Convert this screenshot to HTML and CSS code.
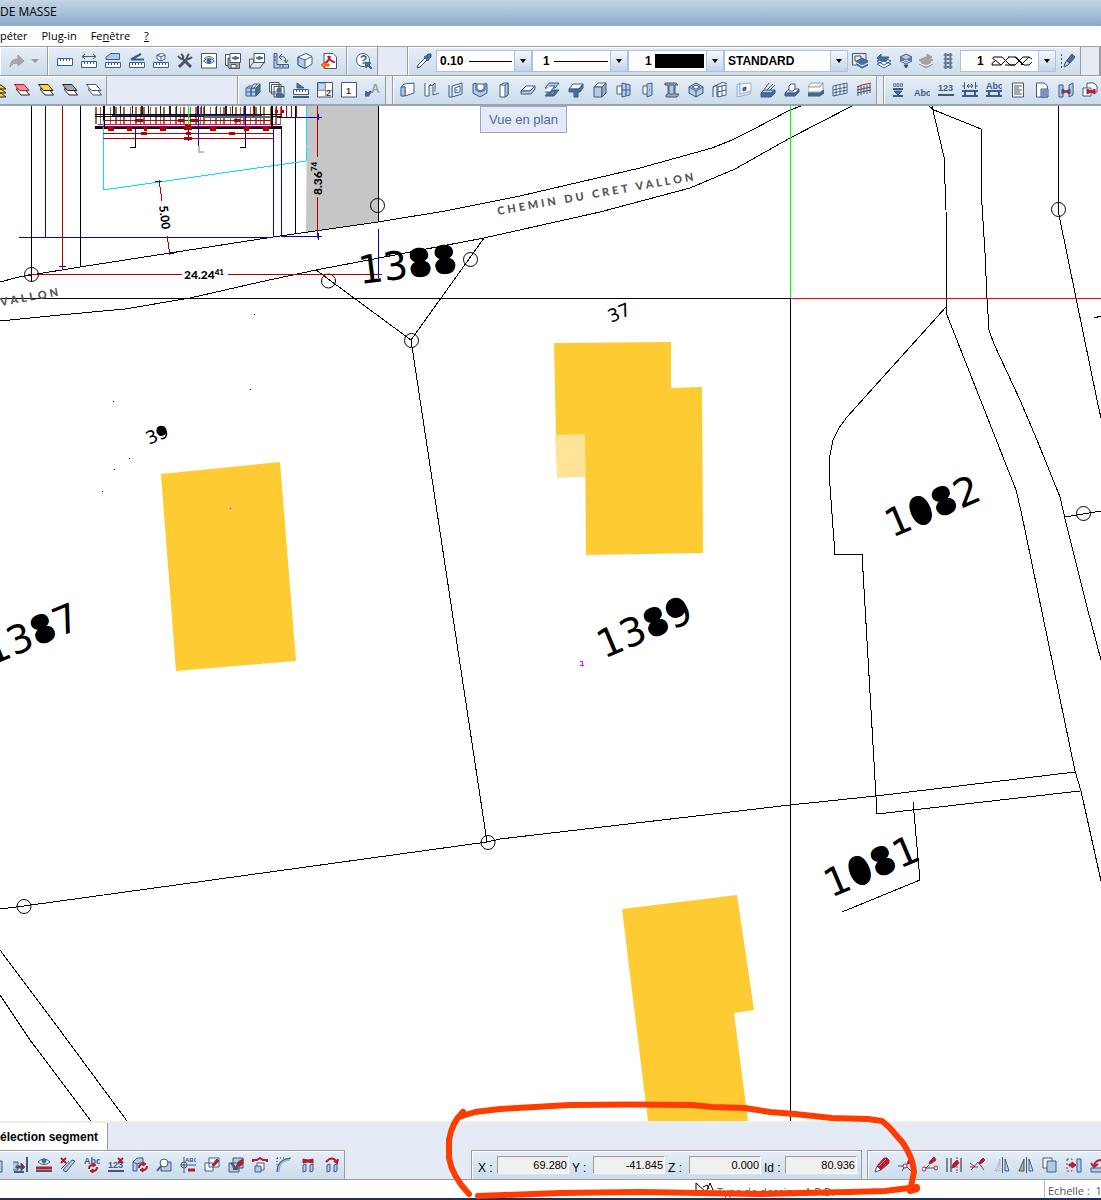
FILE: index.html
```html
<!DOCTYPE html>
<html lang="fr">
<head>
    <meta charset="UTF-8">
    <meta name="viewport" content="width=device-width, initial-scale=1.0">
    <title>Plan de masse</title>
    <link rel="stylesheet" href="styles.css">
</head>
<body>
    <!-- icon set, 16x16 -->
    <svg class="defs" aria-hidden="true">
        <symbol id="redo" viewBox="0 0 16 16"><path class="f-grey s-grey" d="M1 14 Q1 6 9 6 V2 L15 8 L9 13 V10 Q4 9 1 14 Z"/></symbol>
        <symbol id="ruler" viewBox="0 0 16 16"><path class="f-white" d="M.5 5.500 H15.500 V12.500 H.5 Z M3.500 5.500 V8 M6.500 5.500 V8 M9.500 5.500 V8 M12.500 5.500 V8"/></symbol>
        <symbol id="ruler-h" viewBox="0 0 16 16"><path class="f-white" d="M.5 8.500 H15.500 V14.500 H.5 Z M3.500 8.500 V11 M6.500 8.500 V11 M9.500 8.500 V11 M12.500 8.500 V11"/><path class="s-dark" d="M1 3.500 H15 M4 1 L1 3.500 L4 6 M12 1 L15 3.500 L12 6"/></symbol>
        <symbol id="ruler-area" viewBox="0 0 16 16"><path class="f-light" d="M1 6.500 V4 L6 .5 H14.500 V6.500 Z"/><path class="f-white" d="M.5 9.500 H15.500 V14.500 H.5 Z M3.500 9.500 V12 M6.500 9.500 V12 M9.500 9.500 V12 M12.500 9.500 V12"/></symbol>
        <symbol id="ruler-angle" viewBox="0 0 16 16"><path class="thick" d="M12 1 L2 6.500 H15"/><path class="f-white" d="M.5 9.500 H15.500 V14.500 H.5 Z M3.500 9.500 V12 M6.500 9.500 V12 M9.500 9.500 V12 M12.500 9.500 V12"/></symbol>
        <symbol id="ruler-box" viewBox="0 0 16 16"><path class="f-white" d="M4 2 L9 0 L12 2 V6 L8 8 L4 6 Z M4 2 L8 4 L12 2 M8 4 V8"/><path class="f-white" d="M.5 9.500 H15.500 V14.500 H.5 Z M3.500 9.500 V12 M6.500 9.500 V12 M9.500 9.500 V12 M12.500 9.500 V12"/></symbol>
        <symbol id="tools" viewBox="0 0 16 16"><path class="s-dark bold" d="M2 14 L11 5 M8 8 L14 14"/><path class="s-dark thick" d="M5 5 L9 9 M1 3 Q4 7 6 5 Q7 3 4 1 M12 1 Q9 4 11 6 Q13 6 15 4"/></symbol>
        <symbol id="eye-frame" viewBox="0 0 16 16"><path class="f-white s-dark" d="M.5 .5 H15.500 V15 H.5 Z"/><path d="M2.500 8 Q8 3 13.500 8 Q8 13 2.500 8 Z M3 6 Q8 1 13 6"/><circle class="f-dark" cx="8" cy="8" r="2"/></symbol>
        <symbol id="eye-save" viewBox="0 0 16 16"><path class="f-white s-dark" d="M.5 1.500 H8 V12.500 H.5 Z"/><path class="f-grey s-dark" d="M3 5 H14.500 V15.500 H4 L3 14 Z"/><path class="f-white s-dark" d="M6 11.500 H11 V15 H6 Z M5 .5 H15.500 V9.500 H5 Z"/><path d="M7 5 Q10 2 14 5 Q10 8 7 5 Z"/><circle class="f-dark" cx="10.500" cy="5" r="1"/></symbol>
        <symbol id="eye-folder" viewBox="0 0 16 16"><path class="f-pale s-dark" d="M.5 15 V6 H4 L5 9 H12"/><path class="f-white s-dark" d="M5 .5 H15.500 V10 H5 Z"/><path d="M7 5 Q10 2 14 5 Q10 8 7 5 Z"/><circle class="f-dark" cx="10.500" cy="5" r="1"/><path class="f-pale s-dark" d="M.5 15 L4 9.500 H15 L11 15 Z"/></symbol>
        <symbol id="angle" viewBox="0 0 16 16"><path class="f-light" d="M1 .5 H4 V11.500 H15.500 V15 H1 Z M1 4 H3 M1 7 H3 M7 12 V14 M10 12 V14"/><path class="s-dark" d="M7 4 Q13 2 13 9 M9 1 L6 4 L9 7 M11 7 L13 10 L15 7"/></symbol>
        <symbol id="cube" viewBox="0 0 16 16"><path class="f-white" d="M1 4 L9 .5 L15 3.500 V11 L8 15.500 L1 12 Z"/><path class="f-light" d="M1 4 L8 7 V15.500 L1 12 Z"/><path d="M8 7 L15 3.500"/></symbol>
        <symbol id="pdf" viewBox="0 0 16 16"><path class="f-white s-dark" d="M3 .5 H12 L15.500 4 V15.500 H3 Z"/><path class="s-red thick" d="M7 3 Q9 9 14 9 M9 3 Q8 8 4 10"/><path class="f-orange s-orange" d="M0 12 L4 9 V11 H8 V13 H4 V15 Z"/></symbol>
        <symbol id="help" viewBox="0 0 16 16"><circle class="f-white" cx="7" cy="7" r="6.500"/><text x="4" y="11" class="glyph big">?</text><path class="f-dark" d="M9 9 L15 10 L13 12 L16 15 L15 16 L12 13 L10 15 Z"/></symbol>
        <symbol id="dropper" viewBox="0 0 16 16"><path class="f-white s-dark" d="M1 15 L2 12 L9 5 L11 7 L4 14 Z"/><path class="f-dark" d="M8 4 L10 3 L12 1 H15 V4 L13 6 L12 8 Z"/></symbol>
        <symbol id="layers-copy" viewBox="0 0 16 16"><path class="f-pale s-dark" d="M.5 .5 H14 V12 H.5 Z"/><path class="s-dark" d="M3 3 H9 V8 H3 Z"/><path class="f-dark" d="M5 8 L10 5 L16 8 V12 L10 15 L5 12 Z"/><path class="s-white" d="M5 10 L10 13 L16 10"/></symbol>
        <symbol id="layers-back" viewBox="0 0 16 16"><path class="f-white" d="M1 11 L8 8 L15 11 L8 15 Z M1 8 L8 5 L15 8 L8 12 Z"/><path class="f-dark" d="M1 5 L5 1 V4 H13 L10 8 H5 Z"/></symbol>
        <symbol id="layers-down" viewBox="0 0 16 16"><path class="f-white" d="M2 8 L8 5 L14 8 L8 11 Z M2 6 L8 3 L14 6 L8 9 Z"/><path class="f-light" d="M2 4 L8 1 L14 4 L8 7 Z"/><path class="f-black" d="M6 12 H10 L8 15 Z"/></symbol>
        <symbol id="layers-grey" viewBox="0 0 16 16"><path class="f-grey s-grey" d="M1 11 L8 8 L15 11 L8 15 Z M1 7 L8 4 L15 7 L8 11 Z M9 1 L14 4 L9 6 Z"/><path class="s-white" d="M1 10 L8 13 L15 10"/></symbol>
        <symbol id="chain" viewBox="0 0 16 16"><path class="s-dark" d="M5 0 L11 4 L5 8 L11 12 L5 16 M11 0 L5 4 L11 8 L5 12 L11 16"/><circle cx="5" cy="2" r="1"/><circle cx="11" cy="2" r="1"/><circle cx="5" cy="6" r="1"/><circle cx="11" cy="6" r="1"/><circle cx="5" cy="10" r="1"/><circle cx="11" cy="10" r="1"/><circle cx="5" cy="14" r="1"/><circle cx="11" cy="14" r="1"/></symbol>
        <symbol id="pencil" viewBox="0 0 16 16"><path class="s-dark" stroke-dasharray="2 2" d="M1.500 1 V15"/><path class="f-light s-dark" d="M4 14 L5 10 L12 1 L15 4 L8 12 Z"/><path class="f-dark" d="M7 8 L12 1 L15 4 L10 10 Z"/></symbol>
        <symbol id="sheets" viewBox="0 0 16 16"><path class="f-yellow s-black" d="M0 11 H11 L16 15 H5 Z M0 7 H11 L16 11 H5 Z M0 3 H11 L16 7 H5 Z"/></symbol>
        <symbol id="layer-red" viewBox="0 0 16 16"><path class="f-white s-black" d="M2 7 H11 L15.500 13 H7 Z"/><path class="f-pink s-red" d="M.5 2.500 H10 L15 8.500 H5.500 Z"/></symbol>
        <symbol id="layer-yellow" viewBox="0 0 16 16"><path class="f-white s-black" d="M2 7 H11 L15.500 13 H7 Z"/><path class="f-yellow s-black" d="M.5 2.500 H10 L15 8.500 H5.500 Z"/></symbol>
        <symbol id="layer-grey" viewBox="0 0 16 16"><path class="f-white s-black" d="M2 7 H11 L15.500 13 H7 Z"/><path class="f-grey s-black" d="M.5 2.500 H10 L15 8.500 H5.500 Z"/></symbol>
        <symbol id="layer-white" viewBox="0 0 16 16"><path class="f-white s-dark" d="M2 7 H11 L15.500 13 H7 Z"/><path class="f-white s-dark" d="M.5 2.500 H10 L15 8.500 H5.500 Z"/></symbol>
        <symbol id="blocks" viewBox="0 0 16 16"><path class="f-light" d="M1 6 H6 V14 H1 Z M6 6 H11 V14 H6 Z M1 10 H11"/><path class="f-white" d="M6 6 L9 2 H15 L11 6 Z"/><path class="f-dark" d="M11 6 L15 2 V10 L11 14 Z"/><path d="M9 6 L12 2 M1 6 L4 4 H8"/></symbol>
        <symbol id="views" viewBox="0 0 16 16"><path class="f-white s-dark" d="M.5 .5 H10 V10 H.5 Z M2.500 2.500 H12 V12 H2.500 Z M5 4.500 H15 V15 H5 Z"/><circle class="f-dark" cx="10" cy="8" r="2"/><path class="f-dark" d="M7 15 Q7 11 10 11 Q15 11 15 15 Z"/></symbol>
        <symbol id="ruler-tri" viewBox="0 0 16 16"><path class="f-dark" d="M4 1 L11 6 H4 Z"/><path class="f-white" d="M.5 7.500 H15.500 V12.500 H.5 Z M3.500 7.500 V10 M6.500 7.500 V10 M9.500 7.500 V10 M12.500 7.500 V10"/><path class="thick" d="M0 15 H16"/></symbol>
        <symbol id="split" viewBox="0 0 16 16"><path class="f-white s-dark" d="M.5 .5 H15.500 V15 H.5 Z"/><path class="f-blue s-blue" d="M1.500 1.500 H8 V8 H1.500 Z"/><path class="s-grey" d="M8.500 1 V15 M1 8.500 H15"/><text x="9" y="14" class="glyph dark">2</text></symbol>
        <symbol id="page-one" viewBox="0 0 16 16"><path class="f-white s-dark" d="M.5 .5 H15.500 V15 H.5 Z"/><text x="5" y="12" class="glyph dark">1</text></symbol>
        <symbol id="arrow-a" viewBox="0 0 16 16"><text x="6" y="11" class="glyph big grey">A</text><path class="f-dark" d="M0 14 L1 9 L3 11 Q4 9 6 9 V11 Q4 11 4 14 Z"/></symbol>
        <symbol id="wall" viewBox="0 0 16 16"><path class="f-white" d="M1 5 L4 2 L14 1 V11 L5 14 V5 Z"/><path class="f-light" d="M1 5 H5 V14 H1 Z"/></symbol>
        <symbol id="wall-n" viewBox="0 0 16 16"><path class="f-white" d="M1 1 V14 H5 V4 L9 3 V13 L15 11 M5 4 L7 2 M9 3 L11 1 V10"/></symbol>
        <symbol id="wall-hole" viewBox="0 0 16 16"><path class="f-pale" d="M1 3 V15 H4 V4 L14 1 V12 L4 15"/><path class="f-white" d="M7 6 L12 4 V10 L7 11 Z M9 7 V9"/></symbol>
        <symbol id="niche" viewBox="0 0 16 16"><path class="f-light" d="M1 2 L4 1 V8 L8 10 L13 8 V1 L15 2 V11 L8 15 L1 11 Z"/><path class="f-white" d="M5 2 H12 V7 L8 9 L5 7 Z"/></symbol>
        <symbol id="column" viewBox="0 0 16 16"><path class="f-white" d="M4 3 L8 1 H12 V13 L9 15 H4 Z"/><path class="f-light" d="M9 3 L12 1 V13 L9 15 Z M4 3 H9"/></symbol>
        <symbol id="slab" viewBox="0 0 16 16"><path class="f-white" d="M1 9 L6 4 H15 L10 9 Z"/><path class="f-light" d="M1 9 H10 L15 4 V7 L11 12 H1 Z"/></symbol>
        <symbol id="slab-hole" viewBox="0 0 16 16"><path class="f-light" d="M1 6 L5 1 H15 L11 6 Z"/><path class="f-dark" d="M1 14 L6 8 H15 L10 14 Z"/><path class="f-white" d="M5 4 H11 L6 10 H1 M6 12 H9 L11 10"/></symbol>
        <symbol id="tbeam" viewBox="0 0 16 16"><path class="f-white" d="M1 7 L5 2 H15 L11 7 Z"/><path class="f-dark" d="M1 7 H11 L15 2 V6 L12 10 H10 V15 H6 V10 H1 Z"/></symbol>
        <symbol id="block" viewBox="0 0 16 16"><path class="f-white" d="M2 5 L6 1 H14 L10 5 Z"/><path class="f-light" d="M2 5 H10 V15 H2 Z"/><path class="f-grey" d="M10 5 L14 1 V11 L10 15 Z"/></symbol>
        <symbol id="window" viewBox="0 0 16 16"><path class="f-white" d="M1 4 H6 V12 H1 Z"/><path class="f-light" d="M6 1 L14 3 V13 L6 15 Z"/><path d="M10 2 V14 M6 8 H14"/></symbol>
        <symbol id="door" viewBox="0 0 16 16"><path class="f-white" d="M3 4 H8 V12 H3 Z"/><path class="f-light" d="M7 2 L12 1 V13 L7 15 Z"/><path d="M9 8 H10"/></symbol>
        <symbol id="ibeam" viewBox="0 0 16 16"><path class="f-grey s-dark" d="M1 1 H12 L14 3 H11 V12 H15 L13 15 H2 V13 L4 12 V3 H1 Z"/><path class="f-light" d="M5 3 H10 V12 H5 Z"/></symbol>
        <symbol id="cube-open" viewBox="0 0 16 16"><path class="f-light" d="M1 5 L8 1 L15 5 V11 L8 15 L1 11 Z"/><path class="f-white" d="M4 5 L8 3 L12 5 L8 7 Z"/><path d="M1 5 L8 9 L15 5 M8 9 V15"/></symbol>
        <symbol id="facade" viewBox="0 0 16 16"><path class="f-pale s-dark" d="M1 15 V5 L5 3 V15 M1 5 L11 0 L15 2"/><path class="f-white" d="M6 5 L14 3 V13 L6 15 Z M10 4 V14 M6 10 L14 8"/></symbol>
        <symbol id="panel" viewBox="0 0 16 16"><path class="f-pale s-blue" d="M1 3 L4 1 V12 L14 9 V12 L1 15 Z"/><path class="f-white s-blue" d="M4 2 L15 1 V9 L4 12 Z"/><path class="f-dark" d="M7 6 L10 5 V8 L7 9 Z"/></symbol>
        <symbol id="stairs" viewBox="0 0 16 16"><path class="s-dark" d="M3 9 L9 1 M6 9 L13 2 M9 9 L15 3"/><path class="f-light" d="M1 11 L4 8 H15 L11 11 Z"/><path class="f-dark" d="M1 11 H11 L15 8 V11 L11 15 H1 Z"/></symbol>
        <symbol id="opening" viewBox="0 0 16 16"><path class="f-white" d="M1 11 L5 7 H15 L11 11 Z"/><path class="f-white s-dark" d="M5 9 V4 L7 2 H11 V7 L9 9 Z"/><path class="f-dark" d="M1 11 H11 L15 7 V10 L11 14 H1 Z"/></symbol>
        <symbol id="plate" viewBox="0 0 16 16"><path class="f-white s-grey" d="M0 5 L3 1 H15 V8 L12 10 H0 Z M0 5 H12 L15 1"/><path class="f-dark" d="M0 11 H12 L16 8 V11 L12 14 H0 Z"/></symbol>
        <symbol id="grid" viewBox="0 0 16 16"><path class="f-white" d="M1 4 L15 1 V11 L1 14 Z M4 3 V13 M8 3 V12 M12 2 V12 M1 8 L15 5 M1 11 L15 8"/></symbol>
        <symbol id="railing" viewBox="0 0 16 16"><path class="s-dark" d="M2 4 V14 M5 4 V13 M8 4 V12 M11 3 V12 M14 2 V11 M1 8 L15 5 M1 11 L15 8"/><path class="s-red" d="M1 5 L6 3 L15 1"/></symbol>
        <symbol id="level" viewBox="0 0 16 16"><text x="3" y="5" class="glyph tiny">000</text><path class="f-dark" d="M4 9 H12 L8 13 Z"/><path class="thick" d="M3 7 H13 M3 14 H13"/></symbol>
        <symbol id="abc" viewBox="0 0 16 16"><text x="0" y="14" class="glyph">Abc</text></symbol>
        <symbol id="num" viewBox="0 0 16 16"><text x="0" y="9" class="glyph">123</text><path class="thick s-dark" d="M0 13 H16"/></symbol>
        <symbol id="dim" viewBox="0 0 16 16"><path d="M2.500 0 V7 M13.500 0 V7 M0 4 H3 M13 4 H16 M5 4 H11 M7 2 L5 4 L7 6 M9 2 L11 4 L9 6"/><path class="thick" d="M0 9 H16 M0 14 H16 M3 9 V14 M13 9 V14"/></symbol>
        <symbol id="abc-dim" viewBox="0 0 16 16"><text x="0" y="7" class="glyph">Abc</text><path class="thick" d="M0 9 H16 M0 14 H16 M3 9 V14 M13 9 V14"/></symbol>
        <symbol id="page" viewBox="0 0 16 16"><path class="f-white s-dark" d="M2.500 1 H13.500 V15 H2.500 Z M4 4 H12 M4 6 H9 M4 8 H12 M4 10 H10 M4 12 H12"/></symbol>
        <symbol id="page-copy" viewBox="0 0 16 16"><path class="f-white s-dark" d="M2.500 1 H10 L13.500 4 V15 H2.500 Z"/><path class="f-light" d="M7 7 H14 V15 H7 Z M8 9 H13 M8 11 H13 M8 13 H13"/></symbol>
        <symbol id="link" viewBox="0 0 16 16"><path class="f-light" d="M1 3 H5 V15 H1 Z M11 3 L15 1 V13 L11 15 Z"/><path class="f-red" d="M4 7 L8 9 L12 7 V12 L8 10 L4 12 Z"/></symbol>
        <symbol id="link-copy" viewBox="0 0 16 16"><path class="f-white s-dark" d="M5 1 H12 L15 4 V10 H5 Z"/><path class="f-white" d="M1 6 H9 V14 H1 Z"/><path class="f-red s-red" d="M5 7 L9 9 L13 7 V12 L9 10 L5 12 Z"/></symbol>
        <!-- edit tools -->
        <symbol id="extend" viewBox="0 0 16 16"><path class="f-light" d="M1 5 H6 V13 H1"/><path class="thick" d="M15 0 V15 M2 15 H12"/><path class="f-red" d="M4 9 H9 V6 L13 10 L9 14 V11 H4 Z"/></symbol>
        <symbol id="eye-red" viewBox="0 0 16 16"><path class="f-white" d="M2 5 Q8 -1 14 5 Q8 10 2 5 Z"/><circle class="f-dark" cx="8" cy="4" r="2"/><path class="bold s-red" d="M0 11 H16"/><path class="thick s-dark" d="M0 14 H16"/></symbol>
        <symbol id="cut" viewBox="0 0 16 16"><path class="f-light" d="M3 13 L12 3 L15 4 L6 15 Z M1 12 L9 4"/><path class="thick s-red" d="M1 1 L6 6 M6 1 L1 6"/></symbol>
        <symbol id="abc-turn" viewBox="0 0 16 16"><text x="0" y="7" class="glyph">Abc</text><path class="thick s-red" d="M5 12 Q5 8 9 8 M13 10 Q13 14 9 14"/><path class="f-red s-red" d="M9 6 L12 8 L9 10 Z M9 12 L6 14 L9 16 Z"/></symbol>
        <symbol id="num-x" viewBox="0 0 16 16"><text x="0" y="11" class="glyph">123</text><path class="thick s-dark" d="M0 14 H16"/><path class="thick s-red" d="M10 1 L15 6 M15 1 L10 6"/></symbol>
        <symbol id="wall-turn" viewBox="0 0 16 16"><path class="f-light" d="M1 5 L5 1 H11 V5 L5 7 V14 H1 Z M1 5 L5 7"/><path class="thick s-red" d="M7 11 Q7 7 11 7 M15 9 Q15 13 11 13"/><path class="f-red s-red" d="M11 5 L14 7 L11 9 Z M11 11 L8 13 L11 15 Z"/></symbol>
        <symbol id="magnify" viewBox="0 0 16 16"><path class="f-light" d="M5 5 H15 V14 H5 Z"/><circle class="f-white s-dark" cx="8" cy="6" r="4"/><path class="thick" d="M5 9 L1 14"/></symbol>
        <symbol id="axis" viewBox="0 0 16 16"><path class="s-dark" d="M4 0 V16 M0 8 H16"/><circle cx="4" cy="8" r="3"/><text x="5" y="5" class="glyph tiny">ABC</text><path class="bold s-red" d="M8 13 H15"/></symbol>
        <symbol id="copy-pen" viewBox="0 0 16 16"><path class="f-white" d="M5 1 H15 V10 H5 Z M1 6 H9 V14 H1 Z"/><path class="f-red s-red" d="M8 8 L13 2 L15 4 L10 9 Z"/></symbol>
        <symbol id="copy-cut" viewBox="0 0 16 16"><path class="f-light" d="M5 1 H15 V11 H5 Z M1 6 H11 V15 H1 Z"/><path class="s-dark thick" d="M3 6 L9 12 M5 12 H9 V8"/><path class="f-red s-red" d="M9 9 L10 5 L15 2 V7 L12 9 Z"/></symbol>
        <symbol id="bridge" viewBox="0 0 16 16"><path class="f-white" d="M5 6 H12 V13 H5 Z"/><path class="f-light" d="M3 9 H9 V15 H3 Z"/><path class="thick s-red" d="M1 5 V3 H5 L8 1 L11 3 H15 V5"/></symbol>
        <symbol id="fillet" viewBox="0 0 16 16"><path class="bold s-blue" d="M2 15 Q2 3 14 2"/><path class="s-black" stroke-dasharray="1 2" d="M1 1 H10 M1 1 V10"/><path class="s-dark" d="M1 15 Q1 2 15 1"/></symbol>
        <symbol id="pair" viewBox="0 0 16 16"><path class="f-light" d="M3 8 L6 7 V14 L3 15 Z M10 8 L13 7 V14 L10 15 Z"/><path class="f-red s-red" d="M3 2 L8 3 L13 2 V6 L8 5 L3 6 Z"/></symbol>
        <symbol id="pair-turn" viewBox="0 0 16 16"><path class="f-light" d="M3 8 L6 7 V14 L3 15 Z M10 8 L13 7 V14 L10 15 Z"/><path class="thick s-red" d="M2 5 Q8 -2 13 5 M10 4 L13 6 L14 2"/></symbol>
        <symbol id="eraser" viewBox="0 0 16 16"><path class="f-red s-red" d="M3 9 L10 1 H13 L15 3 V6 L7 13 Z"/><path class="f-white s-dark" d="M1 15 L3 9 L7 13 Z"/><path class="s-pink" d="M5 9 L12 2"/></symbol>
        <symbol id="node-pen" viewBox="0 0 16 16"><path class="s-dark" d="M0 9 H6 M9 10 L14 15 M7 9 L4 14"/><circle class="f-white s-red" cx="7" cy="9" r="2"/><path class="f-red s-red" d="M9 7 L10 4 L13 1 L15 3 L12 6 Z"/></symbol>
        <symbol id="nodes-pen" viewBox="0 0 16 16"><path class="s-dark" d="M2 13 L7 8 M3 11 H13"/><circle class="f-white s-red" cx="2" cy="12" r="2"/><circle class="f-white s-red" cx="14" cy="11" r="2"/><path class="f-red s-red" d="M7 7 L8 4 L12 0 L14 3 L10 6 Z"/></symbol>
        <symbol id="bars-pen" viewBox="0 0 16 16"><path class="s-black" d="M1 1 V15 M5 1 V15 M15 1 V15"/><path class="s-dark" stroke-dasharray="2 1" d="M11 0 V16"/><path class="f-red s-red" d="M6 11 L7 7 L11 3 L13 6 L9 10 Z"/></symbol>
        <symbol id="cross-pen" viewBox="0 0 16 16"><path class="s-dark" d="M1 13 L8 5 L14 13"/><path class="s-red" d="M0 6 L5 10 M0 10 H8"/><path class="f-red s-red" d="M9 7 L10 4 L13 1 L15 3 L12 6 Z"/></symbol>
        <symbol id="mirror-dash" viewBox="0 0 16 16"><path class="s-grey" stroke-dasharray="1 1" d="M1 14 L6 2 V14 Z M3 13 L6 6"/><path class="s-dark" d="M8.500 0 V16"/><path class="f-blue" d="M11 2 V14 H15 Z"/></symbol>
        <symbol id="mirror" viewBox="0 0 16 16"><path class="f-grey s-dark" d="M1 14 L6 2 V14 Z"/><path class="s-dark" d="M8.500 0 V16"/><path class="f-blue" d="M11 2 V14 H15 Z"/></symbol>
        <symbol id="copy" viewBox="0 0 16 16"><path class="f-white s-dark" d="M1 1 H10 V11 H1 Z"/><path class="f-light" d="M5 4 H14 V15 H5 Z"/></symbol>
        <symbol id="move" viewBox="0 0 16 16"><path class="s-dark" stroke-dasharray="2 2" d="M1 2 H6 V14 H1 Z"/><path class="f-light" d="M11 2 H15 V15 H11 Z"/><path class="f-red s-red" d="M3 7 H6 V5 L10 8 L6 11 V9 H3 Z"/></symbol>
        <symbol id="rotate" viewBox="0 0 16 16"><path class="f-light" d="M1 11 H15 V15 H1 Z"/><path class="thick s-red" d="M4 9 Q5 2 14 3 M1 6 L4 10 L8 7"/></symbol>
    </svg>

    <header>
        <div class="titlebar"><span class="title">DE MASSE</span></div>
        <nav class="menubar">
            <a href="#">péter</a>
            <a href="#">Plug-in</a>
            <a href="#">Fe<u>n</u>être</a>
            <a href="#"><u>?</u></a>
        </nav>

        <div class="toolbar">
            <div class="group undo">
                <button class="tool narrow" aria-label="Rétablir"><svg class="icon"><use href="#redo"/></svg></button>
                <button class="tool drop" aria-label="Liste"><span class="caret grey"></span></button>
            </div>
            <div class="group padded">
                <button class="tool" aria-label="Distance"><svg class="icon"><use href="#ruler"/></svg></button>
                <button class="tool" aria-label="Longueur"><svg class="icon"><use href="#ruler-h"/></svg></button>
                <button class="tool" aria-label="Surface"><svg class="icon"><use href="#ruler-area"/></svg></button>
                <button class="tool" aria-label="Angle"><svg class="icon"><use href="#ruler-angle"/></svg></button>
                <button class="tool" aria-label="Volume"><svg class="icon"><use href="#ruler-box"/></svg></button>
                <button class="tool" aria-label="Options"><svg class="icon"><use href="#tools"/></svg></button>
                <button class="tool" aria-label="Vue"><svg class="icon"><use href="#eye-frame"/></svg></button>
                <button class="tool" aria-label="Enregistrer la vue"><svg class="icon"><use href="#eye-save"/></svg></button>
                <button class="tool" aria-label="Ouvrir une vue"><svg class="icon"><use href="#eye-folder"/></svg></button>
                <button class="tool" aria-label="Repère"><svg class="icon"><use href="#angle"/></svg></button>
                <button class="tool" aria-label="3D"><svg class="icon"><use href="#cube"/></svg></button>
                <button class="tool" aria-label="PDF"><svg class="icon"><use href="#pdf"/></svg></button>
            </div>
            <div class="group help">
                <button class="tool" aria-label="Aide"><svg class="icon"><use href="#help"/></svg></button>
            </div>
            <div class="group attributes">
                <button class="tool" aria-label="Pipette"><svg class="icon"><use href="#dropper"/></svg></button>
                <div class="combo">
                    <select aria-label="Épaisseur"><option>0.10</option></select>
                    <svg class="sample" viewBox="0 0 43 14"><path d="M0 7.500 H43"/></svg>
                    <span class="arrow"><span class="caret"></span></span>
                </div>
                <div class="combo">
                    <select class="short" aria-label="Type de ligne"><option>1</option></select>
                    <svg class="sample wide" viewBox="0 0 54 14"><path d="M0 7.500 H54"/></svg>
                    <span class="arrow"><span class="caret"></span></span>
                </div>
                <div class="combo">
                    <select class="color" aria-label="Couleur"><option>1</option></select>
                    <span class="swatch"></span>
                    <span class="arrow"><span class="caret"></span></span>
                </div>
                <div class="combo style">
                    <select class="full" aria-label="Style"><option>STANDARD</option></select>
                    <span class="arrow"><span class="caret"></span></span>
                </div>
                <button class="tool" aria-label="Copier le calque"><svg class="icon"><use href="#layers-copy"/></svg></button>
                <button class="tool" aria-label="Calque précédent"><svg class="icon"><use href="#layers-back"/></svg></button>
                <button class="tool narrow" aria-label="Calque actif"><svg class="icon"><use href="#layers-down"/></svg></button>
                <button class="tool narrow" aria-label="Calque suivant"><svg class="icon"><use href="#layers-grey"/></svg></button>
                <button class="tool" aria-label="Isolant"><svg class="icon"><use href="#chain"/></svg></button>
                <div class="combo">
                    <select class="insulation" aria-label="Motif"><option>1</option></select>
                    <svg class="sample smooth" viewBox="0 0 43 14"><path d="M3 3 H11 L19 11 H24 L32 3 H38 M17 3 H25 L33 11 H38 L41 8 M1 11 H10 L18 3 M14 11 H24 M30 11 L38 3 L41 5 M3 3 Q0 4 4 6 L10 11 M1 11 Q0 9 4 7 M24 3 L32 11"/></svg>
                    <span class="arrow"><span class="caret"></span></span>
                </div>
                <button class="tool" aria-label="Modifier le motif"><svg class="icon"><use href="#pencil"/></svg></button>
            </div>
            <div class="group rest"></div>
        </div>

        <div class="toolbar second">
            <div class="group layers">
                <button class="tool" aria-label="Calques"><svg class="icon"><use href="#sheets"/></svg></button>
                <button class="tool" aria-label="Calque rouge"><svg class="icon"><use href="#layer-red"/></svg></button>
                <button class="tool" aria-label="Calque jaune"><svg class="icon"><use href="#layer-yellow"/></svg></button>
                <button class="tool" aria-label="Calque gris"><svg class="icon"><use href="#layer-grey"/></svg></button>
                <button class="tool" aria-label="Calque blanc"><svg class="icon"><use href="#layer-white"/></svg></button>
            </div>
            <div class="group views">
                <button class="tool" aria-label="Blocs"><svg class="icon"><use href="#blocks"/></svg></button>
                <button class="tool" aria-label="Vues"><svg class="icon"><use href="#views"/></svg></button>
                <button class="tool" aria-label="Métré"><svg class="icon"><use href="#ruler-tri"/></svg></button>
                <button class="tool" aria-label="Fenêtres"><svg class="icon"><use href="#split"/></svg></button>
                <button class="tool" aria-label="Page"><svg class="icon"><use href="#page-one"/></svg></button>
                <button class="tool" aria-label="Texte"><svg class="icon"><use href="#arrow-a"/></svg></button>
            </div>
            <div class="group elements">
                <button class="tool" aria-label="Mur"><svg class="icon"><use href="#wall"/></svg></button>
                <button class="tool" aria-label="Ouverture"><svg class="icon"><use href="#wall-n"/></svg></button>
                <button class="tool" aria-label="Baie"><svg class="icon"><use href="#wall-hole"/></svg></button>
                <button class="tool" aria-label="Niche"><svg class="icon"><use href="#niche"/></svg></button>
                <button class="tool" aria-label="Poteau"><svg class="icon"><use href="#column"/></svg></button>
                <button class="tool" aria-label="Dalle"><svg class="icon"><use href="#slab"/></svg></button>
                <button class="tool" aria-label="Trémie"><svg class="icon"><use href="#slab-hole"/></svg></button>
                <button class="tool" aria-label="Poutre"><svg class="icon"><use href="#tbeam"/></svg></button>
                <button class="tool" aria-label="Bloc"><svg class="icon"><use href="#block"/></svg></button>
                <button class="tool" aria-label="Fenêtre"><svg class="icon"><use href="#window"/></svg></button>
                <button class="tool" aria-label="Porte"><svg class="icon"><use href="#door"/></svg></button>
                <button class="tool" aria-label="Profilé"><svg class="icon"><use href="#ibeam"/></svg></button>
                <button class="tool" aria-label="Pièce"><svg class="icon"><use href="#cube-open"/></svg></button>
                <button class="tool" aria-label="Façade"><svg class="icon"><use href="#facade"/></svg></button>
                <button class="tool" aria-label="Panneau"><svg class="icon"><use href="#panel"/></svg></button>
                <button class="tool" aria-label="Escalier"><svg class="icon"><use href="#stairs"/></svg></button>
                <button class="tool" aria-label="Réservation"><svg class="icon"><use href="#opening"/></svg></button>
                <button class="tool" aria-label="Plancher"><svg class="icon"><use href="#plate"/></svg></button>
                <button class="tool" aria-label="Trame"><svg class="icon"><use href="#grid"/></svg></button>
                <button class="tool" aria-label="Garde-corps"><svg class="icon"><use href="#railing"/></svg></button>
            </div>
            <div class="group notes">
                <button class="tool" aria-label="Niveau"><svg class="icon"><use href="#level"/></svg></button>
                <button class="tool" aria-label="Texte libre"><svg class="icon"><use href="#abc"/></svg></button>
                <button class="tool" aria-label="Numéro"><svg class="icon"><use href="#num"/></svg></button>
                <button class="tool" aria-label="Cote"><svg class="icon"><use href="#dim"/></svg></button>
                <button class="tool" aria-label="Cote texte"><svg class="icon"><use href="#abc-dim"/></svg></button>
                <button class="tool" aria-label="Notice"><svg class="icon"><use href="#page"/></svg></button>
                <button class="tool" aria-label="Copier la notice"><svg class="icon"><use href="#page-copy"/></svg></button>
                <button class="tool" aria-label="Lier"><svg class="icon"><use href="#link"/></svg></button>
                <button class="tool" aria-label="Copier le lien"><svg class="icon"><use href="#link-copy"/></svg></button>
            </div>
        </div>
    </header>

    <main class="canvas">
        <div class="tooltip" role="tooltip">Vue en plan</div>
        <svg class="plan" viewBox="0 106 1101 1015" preserveAspectRatio="xMinYMin slice">
            <!-- terrace and buildings -->
            <path class="terrace" d="M307 106 H378 V222 L306 233 Z"/>
            <g class="building">
                <path d="M161 474 L280 462 L296 661 L176 671 Z"/>
                <path d="M554 343 L671 342 V388 L702 387 L703 553 L586 555 L585 435 L556 436 Z"/>
                <path class="annex" d="M555 435 L585 434 V477 L557 478 Z"/>
                <path d="M622 909 L737 895 L754 1010 L734 1013 L748 1121 H648 Z"/>
            </g>

            <!-- parcel limits -->
            <g class="line">
                <path d="M0 282 L19 277 L80 267 L273 237 L378 222 L445 211 L520 196 L640 168 L712 148 L732 140 L752 130 L790 110 L801 106"/>
                <path d="M0 321 L60 315 L125 309 L190 298 L260 282 L316 270 L484 238 L600 212 L690 188 L735 169 L790 138 L852 106"/>
                <path d="M316 270 L411 340 L484 238 M411 340 L487 842"/>
                <path d="M0 909 L24 906 L487 842 L500 839 L790 805 L876 796 L1075 772"/>
                <path d="M0 950 L68 1041 L127 1121 M0 995 L30 1040 L91 1121"/>
                <path d="M932 106 L944 157 L946 210 L947 315 L1016 490 L1021 511 L1075 771 L1081 791 L1101 881"/>
                <path d="M929 106 L934 110 L981 129 V150 L982 205 L985 253 L987 298 L989 330 L994 344 L1020 400 L1037 440 L1060 497 L1066 523 L1087 607 L1101 660"/>
                <path d="M1058 106 V210 L1076 298 L1097 400 L1101 418 M1094 318 L1101 316 M1065 517 L1101 511"/>
                <path d="M946 307 L847 417 L839 428 L833 440 L829 460 L829 472 L835 555 L862 554 L877 814 L1080 791 M913 802 L920 880 L842 912"/>
                <path d="M31.500 106 V282 M80.500 106 V267 M295.500 106 V234 M378.500 106 V222"/>
                <path d="M0 298.500 H790 M790.500 298 V1121"/>
                <path d="M254 314 h1 M250 389 h1 M113 401 h1 M114 469 h1 M129 458 h1 M102 491 h1 M230 508 h1"/>
            </g>
            <g class="borne">
                <circle cx="31.500" cy="274.500" r="7"/>
                <circle cx="377.500" cy="205.500" r="7"/>
                <circle cx="328.500" cy="281" r="7"/>
                <circle cx="470.500" cy="259.500" r="7"/>
                <circle cx="411.500" cy="340.500" r="7"/>
                <circle cx="488" cy="842.500" r="7"/>
                <circle cx="24" cy="906.500" r="7"/>
                <circle cx="1058.500" cy="209.500" r="7"/>
                <circle cx="1083.500" cy="513.500" r="7"/>
            </g>
            <path class="red" d="M791 298.500 H1101"/>
            <path class="green" d="M790.500 106 V298"/>

            <!-- house projection -->
            <g class="line">
                <path stroke="#a06a35" stroke-width="17" stroke-dasharray="2 3 1 2 2 5 1 4" d="M95 115 H282"/>
                <path stroke="#222" stroke-width="8" stroke-dasharray="1 8 2 5 1 11" d="M104 110 H272"/>
                <path d="M95 114.500 H282 M95 116.500 H282"/>
                <path stroke="#2020b0" d="M112 115.500 H262"/>
                <path stroke="#666" stroke-width="2" d="M204 117 H272"/>
                <path stroke="#cc00cc" d="M98 124.500 H281"/>
                <path stroke-width="2" d="M104 106 V128 M272 106 V128 M103 128 H274"/>
                <path stroke-width="3" d="M95 127.500 H106 M270 127.500 H282"/>
                <path d="M135.500 139 V148 M130 147.500 H136 M245.500 139 V148 M240 147.500 H246"/>
            </g>
            <g class="cyan"><path d="M103.500 120 V190 L306 161 V147 L307 106"/></g>
            <g class="blue">
                <path d="M45.500 106 V237 M19 237.500 H273 M273.500 128 V237 M281.500 128 V237 M198.500 106 V146 M188.500 130 V141 M245.500 106 V140 M135.500 128 V140"/>
                <path d="M277 117.500 H322 M281 236.500 H322 M378.500 229 V278 M59 266.500 H66 M155 182 L162 181 M167 253 L174 254 M318 114 V120 M318 233 V240"/>
            </g>
            <path class="grey-line" d="M198.500 146 V152 H204"/>
            <g class="dimension">
                <path d="M62.500 106 V270 M317.500 106 V157 M317.500 197 V238 M28 274.500 H182 M228 274.500 H382 M159 180 L162 201 M167 236 L170 255"/>
                <path d="M103 120.500 H273 M103 133.500 H273 M103 138.500 H273 M103 126.500 H273 M276 106 V117 M281 106 V117 M286 106 V117 M291 106 V117 M296 106 V117 M201 106 V117 M253 106 V117"/>
                <path stroke-width="4" d="M108 129 h6 M127 129 h5 M144 129 h3 M160 129 h6 M184 128 h8 M210 129 h6 M244 129 h5 M263 129 h6"/>
                <path stroke-width="3" d="M141 133.500 h6 M186 133.500 h5 M229 133.500 h6 M184 138.500 h8 M135 120.500 h8 M178 120.500 h6 M190 120.500 h8 M234 120.500 h6 M185 125 h6 M275 111 h3 M281 111 h3"/>
            </g>
            <path class="green" d="M188.500 106 V125"/>
            <path class="magenta" d="M580 661.500 H583 M582.500 662 V665 M580 665.500 H584"/>

            <!-- dimension values and street name -->
            <text class="value" x="184" y="279">24.24<tspan class="sup" dy="-4">41</tspan></text>
            <text class="value" transform="translate(322 195) rotate(-90)">8.36<tspan class="sup" dy="-5">74</tspan></text>
            <text class="value" transform="translate(159 206) rotate(83)">5.00</text>
            <text class="street" transform="translate(498 215) rotate(-10)">CHEMIN DU CRET VALLON</text>
            <text class="street" transform="translate(1 306) rotate(-10)">VALLON</text>

            <!-- parcel numbers, closed counters are filled -->
            <g class="parcel" transform="translate(360 284) rotate(-7)">
                <text>1388</text>
                <ellipse cx="62" cy="-21" rx="9" ry="7"/><ellipse cx="62" cy="-8" rx="10" ry="8"/>
                <ellipse cx="87" cy="-21" rx="9" ry="7"/><ellipse cx="87" cy="-8" rx="10" ry="8"/>
            </g>
            <g class="parcel" transform="translate(604 659) rotate(-23)">
                <text>1389</text>
                <ellipse cx="62" cy="-21" rx="9" ry="7"/><ellipse cx="62" cy="-8" rx="10" ry="8"/>
                <ellipse cx="86" cy="-19" rx="10" ry="10"/>
            </g>
            <g class="parcel" transform="translate(892 538) rotate(-23)">
                <text>1082</text>
                <ellipse cx="37" cy="-14" rx="10" ry="15"/>
                <ellipse cx="62" cy="-21" rx="9" ry="7"/><ellipse cx="62" cy="-8" rx="10" ry="8"/>
            </g>
            <g class="parcel" transform="translate(831 898) rotate(-23)">
                <text>1081</text>
                <ellipse cx="37" cy="-14" rx="10" ry="15"/>
                <ellipse cx="62" cy="-21" rx="9" ry="7"/><ellipse cx="62" cy="-8" rx="10" ry="8"/>
            </g>
            <g class="parcel" transform="translate(-9 666) rotate(-23)">
                <text>1387</text>
                <ellipse cx="62" cy="-21" rx="9" ry="7"/><ellipse cx="62" cy="-8" rx="10" ry="8"/>
            </g>
            <g class="house-number" transform="translate(611 323) rotate(-23)"><text>37</text></g>
            <g class="house-number" transform="translate(149 445) rotate(-23)"><text>39</text><ellipse cx="17" cy="-8" rx="5" ry="5"/></g>
        </svg>
    </main>

    <footer>
        <div class="tabs"><span class="tab">élection segment</span></div>
        <div class="toolbar bottom">
            <div class="group edit">
                <button class="tool" aria-label="Copie"><svg class="icon"><use href="#copy"/></svg></button>
                <button class="tool" aria-label="Prolonger"><svg class="icon"><use href="#extend"/></svg></button>
                <button class="tool" aria-label="Masquer"><svg class="icon"><use href="#eye-red"/></svg></button>
                <button class="tool" aria-label="Couper"><svg class="icon"><use href="#cut"/></svg></button>
                <button class="tool" aria-label="Remplacer le texte"><svg class="icon"><use href="#abc-turn"/></svg></button>
                <button class="tool" aria-label="Effacer la cote"><svg class="icon"><use href="#num-x"/></svg></button>
                <button class="tool" aria-label="Remplacer le mur"><svg class="icon"><use href="#wall-turn"/></svg></button>
                <button class="tool" aria-label="Rechercher"><svg class="icon"><use href="#magnify"/></svg></button>
                <button class="tool" aria-label="Axe"><svg class="icon"><use href="#axis"/></svg></button>
                <button class="tool" aria-label="Modifier"><svg class="icon"><use href="#copy-pen"/></svg></button>
                <button class="tool" aria-label="Découper"><svg class="icon"><use href="#copy-cut"/></svg></button>
                <button class="tool" aria-label="Raccorder"><svg class="icon"><use href="#bridge"/></svg></button>
                <button class="tool" aria-label="Congé"><svg class="icon"><use href="#fillet"/></svg></button>
                <button class="tool" aria-label="Lier les éléments"><svg class="icon"><use href="#pair"/></svg></button>
                <button class="tool" aria-label="Inverser"><svg class="icon"><use href="#pair-turn"/></svg></button>
            </div>
            <div class="group coords">
                <label for="cx">X :</label><input id="cx" type="text" value="69.280">
                <label for="cy">Y :</label><input id="cy" type="text" value="-41.845">
                <label for="cz">Z :</label><input id="cz" type="text" value="0.000">
                <label for="cd">Id :</label><input id="cd" type="text" value="80.936">
            </div>
            <div class="group modify">
                <button class="tool" aria-label="Gomme"><svg class="icon"><use href="#eraser"/></svg></button>
                <button class="tool" aria-label="Effacer le sommet"><svg class="icon"><use href="#node-pen"/></svg></button>
                <button class="tool" aria-label="Effacer le segment"><svg class="icon"><use href="#nodes-pen"/></svg></button>
                <button class="tool" aria-label="Effacer entre"><svg class="icon"><use href="#bars-pen"/></svg></button>
                <button class="tool" aria-label="Ajuster"><svg class="icon"><use href="#cross-pen"/></svg></button>
                <button class="tool" aria-label="Symétrie"><svg class="icon"><use href="#mirror-dash"/></svg></button>
                <button class="tool" aria-label="Symétrie copie"><svg class="icon"><use href="#mirror"/></svg></button>
                <button class="tool" aria-label="Dupliquer"><svg class="icon"><use href="#copy"/></svg></button>
                <button class="tool" aria-label="Déplacer"><svg class="icon"><use href="#move"/></svg></button>
                <button class="tool" aria-label="Tourner"><svg class="icon"><use href="#rotate"/></svg></button>
            </div>
        </div>
        <div class="status">
            <svg class="sketch" viewBox="0 0 20 14"><path d="M1 14 V1 L11 10 L15 1 L18 8 L20 14 M8 5 L12 3 L14 7"/></svg>
            <span class="kind">Type de dessin :&nbsp; A.P.D.</span>
            <span class="scale">Echelle :&nbsp; 1</span>
        </div>
        <!-- red pen mark round the coordinates -->
        <svg class="mark" viewBox="0 0 1101 105" aria-hidden="true">
            <path d="M463 17 Q452 27 449 45 V63 Q452 81 469 99"/>
            <path d="M463 17 L459 22 L475 17 L500 14 L570 10 Q630 9 692 10 L712 12 L745 13 L770 17 L795 19 L832 23 L868 24 L882 26 L889 32 L903 48 Q913 63 914 77 L910 96 L917 94"/>
            <path d="M478 101 L560 98 L640 97 L700 98 L760 99 L800 98 L850 97 L885 96 L917 92"/>
        </svg>
    </footer>
</body>
</html>
```

FILE: styles.css
```css
* {
    box-sizing: border-box;
}
body {
    margin: 0;
    height: 100vh;
    display: flex;
    flex-direction: column;
    overflow: hidden;
    background: #fff;
    color: #000;
    font-family: "Liberation Sans", Arial, sans-serif;
    font-size: 12px;
}
.defs {
    display: none;
}

/* title and menu */
.titlebar {
    height: 26px;
    display: flex;
    align-items: center;
    background: linear-gradient(#c4d5e6, #aec5dd 40%, #8aa9cc);
    font-family: "Open Sans", sans-serif;
}
.title {
    padding-bottom: 3px;
}
.menubar {
    height: 21px;
    display: flex;
    align-items: center;
    gap: 14px;
    padding-bottom: 2px;
    border-bottom: 1px solid #a0a09c;
    font-family: "Open Sans", sans-serif;
    font-size: 11px;
}
.menubar a {
    color: #000;
    text-decoration: none;
}

/* toolbars */
.toolbar {
    display: flex;
    height: 29px;
    background: #e4ebf6;
    border-bottom: 1px solid #9c9c9c;
    overflow: hidden;
}
.toolbar.second {
    height: 30px;
    border-bottom: 2px solid #9aa2b4;
}
.toolbar.bottom {
    height: 30px;
}
.group {
    flex: none;
    display: flex;
    align-items: center;
    border-left: 1px solid #9c9c9c;
    border-right: 1px solid #9c9c9c;
    box-shadow: inset 1px 1px #fff;
    background: linear-gradient(#e6eef7, #cbdcec);
}
.undo {
    width: 47px;
    padding-left: 7px;
    border: none;
}
.padded {
    padding: 0 5px;
    border-right: none;
}
.help {
    padding: 0 1px 0 5px;
    margin-right: 29px;
}
.attributes {
    padding-left: 4px;
    margin-right: 18px;
}
.rest {
    flex: 1;
}
.layers {
    margin-left: -14px;
    margin-right: 130px;
    border-left: none;
}
.views, .elements {
    padding-left: 3px;
    margin-right: 6px;
}
.notes {
    flex: 1 0 auto;
    padding-left: 2px;
    border-right: none;
}
.tool {
    flex: none;
    width: 24px;
    height: 24px;
    padding: 0;
    border: none;
    background: none;
    display: flex;
    align-items: center;
    justify-content: center;
}
.tool.narrow {
    width: 20px;
}
.tool.drop {
    width: 16px;
}
.tool:hover {
    background: #f4f8fc;
}
.caret {
    border: 3px solid transparent;
    border-top: 4px solid #000;
    border-bottom: none;
}
.caret.grey {
    border-top-color: #999;
    border-left-width: 4px;
    border-right-width: 4px;
}

/* drop-downs */
.combo {
    flex: none;
    width: 96px;
    height: 22px;
    display: flex;
    align-items: center;
    background: #fff;
    border: 1px solid #a9c2e2;
}
.combo.style {
    width: 124px;
}
.combo select {
    appearance: none;
    width: 32px;
    height: 20px;
    padding: 0 0 0 3px;
    border: none;
    background: none;
    font: bold 12px "Liberation Sans", Arial, sans-serif;
    color: #000;
}
.combo select.short {
    width: 21px;
    padding-left: 10px;
}
.combo select.color {
    width: 26px;
    padding-left: 16px;
}
.combo select.insulation {
    width: 30px;
    padding-left: 16px;
}
.combo select.full {
    width: 104px;
}
.sample {
    width: 43px;
    height: 14px;
    fill: none;
    stroke: #000;
    shape-rendering: crispEdges;
}
.sample.wide {
    width: 54px;
}
.sample.smooth {
    shape-rendering: auto;
}
.swatch {
    width: 49px;
    height: 14px;
    background: #000;
}
.arrow {
    margin-left: auto;
    width: 17px;
    height: 20px;
    display: flex;
    align-items: center;
    justify-content: center;
    border-left: 1px solid #a9c2e2;
    background: linear-gradient(#f6f9fd, #c3d5e8);
    pointer-events: none;
}

/* icon colours */
.icon {
    width: 16px;
    height: 16px;
    fill: none;
    stroke: #3b5d8c;
    stroke-width: 1;
}
.thick { stroke-width: 2; }
.bold { stroke-width: 3; }
.f-white { fill: #fff; }
.f-pale { fill: #e3e9f0; }
.f-light { fill: #b4cae4; }
.f-blue { fill: #c0dcfa; }
.f-dark { fill: #4a6d9c; }
.f-black { fill: #222; }
.f-grey { fill: #a8a8a8; }
.f-red { fill: #b51c30; }
.f-pink { fill: #ff8a94; }
.f-yellow { fill: #ffd52e; }
.f-orange { fill: #ff7a1c; }
.s-dark { stroke: #4c5666; }
.s-black { stroke: #222; }
.s-grey { stroke: #9a9a9a; }
.s-white { stroke: #fff; }
.s-blue { stroke: #8fb0dc; }
.s-red { stroke: #b51c30; }
.s-pink { stroke: #e89aa4; }
.s-orange { stroke: #e8540c; }
.glyph {
    font: bold 9px "Liberation Sans", Arial, sans-serif;
    fill: #3b5d8c;
    stroke: none;
}
.glyph.big { font-size: 12px; }
.glyph.tiny { font-size: 6px; }
.glyph.dark { fill: #444; }
.glyph.grey { fill: #999; }

/* drawing area */
.canvas {
    flex: 1;
    min-height: 0;
    position: relative;
    background: #fff;
}
.tooltip {
    position: absolute;
    left: 480px;
    top: 0;
    padding: 5px 8px;
    border: 1px solid #98a8c8;
    background: #e6eaf7;
    color: #4a6c9c;
    font-size: 13px;
    line-height: 15px;
}
.plan {
    display: block;
    width: 100%;
    height: 100%;
    fill: none;
}
.line, .cyan, .blue, .dimension, .red, .green, .magenta, .grey-line {
    stroke: #000;
    shape-rendering: crispEdges;
}
.cyan { stroke: #00e8e8; }
.blue { stroke: #0000d0; }
.dimension { stroke: #b40000; }
.red { stroke: #f00; }
.green { stroke: #0f0; }
.magenta { stroke: #f0f; }
.grey-line { stroke: #c0c0c0; stroke-width: 2; }
.borne { stroke: #000; stroke-width: 1; }
.terrace { fill: #c6c6c6; }
.building { fill: #ffcb32; }
.annex { fill: #ffe398; }
.parcel, .house-number {
    fill: #000;
    font-family: "DejaVu Sans", sans-serif;
    font-size: 39px;
}
.house-number {
    font-size: 18px;
}
.value {
    fill: #000;
    font: 900 12px Lato, sans-serif;
}
.sup {
    font-size: 8px;
}
.street {
    fill: #555;
    font: 900 11px Lato, sans-serif;
    letter-spacing: 3px;
}

/* bottom bars */
footer {
    position: relative;
    border-top: 2px solid #f0ede2;
}
.tabs {
    height: 27px;
    display: flex;
    background: #e4ebf6;
}
.tab {
    display: flex;
    align-items: center;
    width: 108px;
    background: #fff;
    border-right: 1px solid #9c9c9c;
    font-weight: bold;
}
.bottom .group {
    border-top: 1px solid #9c9c9c;
}
.edit {
    margin-left: -17px;
    margin-right: 126px;
}
.coords {
    width: 391px;
    margin-right: 5px;
    padding-left: 1px;
}
.coords label {
    width: 24px;
    padding-top: 5px;
    padding-left: 5px;
    white-space: nowrap;
    font-size: 12px;
}
.coords label:not(:first-child) {
    padding-left: 3px;
}
.coords input {
    width: 72px;
    height: 18px;
    padding: 0 1px;
    border: 1px solid #fff;
    border-top-color: #9c9c9c;
    border-left-color: #9c9c9c;
    background: #f0f0f0;
    text-align: right;
    font: 11px "Liberation Sans", Arial, sans-serif;
}
.modify {
    flex: 1 0 auto;
    padding-left: 2px;
}
.status {
    height: 20px;
    display: flex;
    align-items: center;
    border-bottom: 2px solid #1c2f5c;
    background: #fff;
    color: #555;
    font-family: "Open Sans", sans-serif;
    font-size: 11px;
    line-height: 16px;
    overflow: hidden;
}
.sketch {
    width: 20px;
    height: 14px;
    margin-left: 695px;
    fill: none;
    stroke: #000;
}
.kind {
    margin-left: 2px;
    padding-top: 6px;
}
.scale {
    margin-left: auto;
    width: 57px;
    padding: 4px 0 0 3px;
    border-left: 1px solid #bbb;
    white-space: nowrap;
}
.mark {
    position: absolute;
    left: 0;
    bottom: 0;
    width: 1101px;
    height: 105px;
    fill: none;
    stroke: #ff3c00;
    stroke-width: 6;
    stroke-linecap: round;
    stroke-linejoin: round;
    pointer-events: none;
}
```
